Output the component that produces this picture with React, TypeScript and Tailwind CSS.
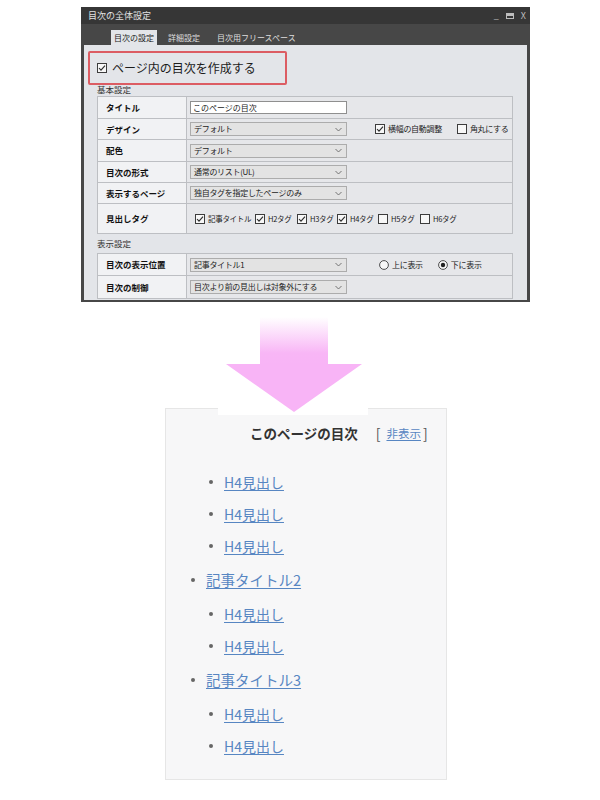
import React from 'react';

const jp = "font-['Noto_Sans_CJK_JP','Noto_Sans',sans-serif]";

const Check = ({ checked }: { checked?: boolean }) => (
  <svg width="10" height="10" viewBox="0 0 10 10" className="shrink-0">
    <rect x="0.5" y="0.5" width="9" height="9" fill="#f7f7f7" stroke="#3c3c3c" />
    {checked && <polyline points="2,5 4,7.2 8,2.6" fill="none" stroke="#2a2a2a" strokeWidth="1.1" />}
  </svg>
);

const Radio = ({ checked }: { checked?: boolean }) => (
  <svg width="10" height="10" viewBox="0 0 10 10" className="shrink-0">
    <circle cx="5" cy="5" r="4.4" fill="#f7f7f7" stroke="#3c3c3c" strokeWidth="0.9" />
    {checked && <circle cx="5" cy="5" r="2.2" fill="#222" />}
  </svg>
);

const Select = ({ value }: { value: string }) => (
  <div className="flex h-[14px] w-[157px] shrink-0 items-center justify-between border border-[#acacac] bg-[#e3e3e3] pl-[3px] pr-[4px]">
    <span className="whitespace-nowrap text-[8px] leading-none tracking-[-0.3px] text-[#222]">{value}</span>
    <svg width="7" height="5" viewBox="0 0 7 5" className="shrink-0">
      <polyline points="0.5,1 3.5,4 6.5,1" fill="none" stroke="#666" strokeWidth="0.9" />
    </svg>
  </div>
);

const Row = ({ label, h, children }: { label: string; h: string; children: React.ReactNode }) => (
  <div className={`flex ${h} border-b border-[#bdbfc3] last:border-b-0`}>
    <div className="flex w-[89px] shrink-0 items-center whitespace-nowrap border-r border-[#bdbfc3] bg-[#f1f2f4] pl-[8px] text-[8.5px] font-bold text-[#111]">
      {label}
    </div>
    <div className="flex flex-1 items-center bg-[#e6e7ea] pl-[3px]">{children}</div>
  </div>
);

const Opt = ({ label, w, ml, children }: { label: string; w?: string; ml?: string; children: React.ReactNode }) => (
  <div className={`flex shrink-0 items-center gap-[3px] whitespace-nowrap text-[8px] tracking-[-0.3px] text-[#222] ${w ?? ''} ${ml ?? ''}`}>
    {children}
    <span>{label}</span>
  </div>
);

const Bullet = ({ href, top }: { href: string; top?: boolean }) => (
  <li className={`flex items-center ${top ? 'h-[36px] pl-[25px] text-[14.5px]' : 'h-[32px] pl-[43px] text-[14px]'}`}>
    <span className="mr-[11px] h-[4px] w-[4px] rounded-full bg-[#666]" />
    <a className="text-[#5786c2] underline underline-offset-2" href="#">{href}</a>
  </li>
);

export default function App() {
  return (
    <div className={`min-h-[800px] w-[600px] bg-white ${jp}`}>
      {/* settings dialog */}
      <div className="ml-[81px] w-[449px] pt-[7px]">
        <div className="flex h-[17px] items-center justify-between bg-[#363636] pl-[7px] pr-[4px]">
          <span className="text-[9px] text-[#e2e2e2]">目次の全体設定</span>
          <div className="flex items-center gap-[7px] text-[9px] text-[#bdbdbd]">
            <span className="leading-none">_</span>
            <span className="block h-[6px] w-[8px] border-[1.5px] border-t-[3px] border-[#bdbdbd]" />
            <span className="leading-none">X</span>
          </div>
        </div>
        <div className="flex h-[21px] items-end bg-[#474747] pl-[30px]">
          <div className="flex h-[15px] w-[46px] items-center justify-center whitespace-nowrap bg-[#e3e5e9] text-[8px] text-[#222]">目次の設定</div>
          <div className="flex h-[15px] items-center whitespace-nowrap pl-[11px] text-[8px] text-[#dedede]">詳細設定</div>
          <div className="flex h-[15px] items-center whitespace-nowrap pl-[17px] text-[8px] text-[#dedede]">目次用フリースペース</div>
        </div>
        <div className="h-[257px] border-x-[3px] border-b-[2px] border-[#474747] bg-[#e3e5e9] pt-[6px]">
          <div className="relative z-10 ml-[4px] flex h-[34px] w-[199px] items-center gap-[5px] rounded-[2px] border-2 border-[#dc5d63] pl-[7px]">
            <Check checked />
            <span className="text-[12px] text-[#1c1c1c]">ページ内の目次を作成する</span>
          </div>
          <div className="ml-[13px] mt-[-2px] text-[8.5px] leading-[12px] text-[#333]">基本設定</div>
          <div className="ml-[13px] mt-[1px] w-[416px] border border-[#bdbfc3]">
            <Row label="タイトル" h="h-[22px]">
              <div className="flex h-[13px] w-[157px] items-center whitespace-nowrap border border-[#8f8f8f] bg-white pl-[2px] text-[8px] text-[#222]">
                このページの目次
              </div>
            </Row>
            <Row label="デザイン" h="h-[21px]">
              <Select value="デフォルト" />
              <Opt label="横幅の自動調整" ml="ml-[28px]"><Check checked /></Opt>
              <Opt label="角丸にする" ml="ml-[15px]"><Check /></Opt>
            </Row>
            <Row label="配色" h="h-[22px]">
              <Select value="デフォルト" />
            </Row>
            <Row label="目次の形式" h="h-[21px]">
              <Select value="通常のリスト(UL)" />
            </Row>
            <Row label="表示するページ" h="h-[21px]">
              <Select value="独自タグを指定したページのみ" />
            </Row>
            <Row label="見出しタグ" h="h-[29px]">
              <div className="flex items-center pl-[5px] text-[7.5px]">
                <Opt label="記事タイトル" w="w-[60px] !text-[7.5px]"><Check checked /></Opt>
                <Opt label="H2タグ" w="w-[42px] !text-[7.5px]"><Check checked /></Opt>
                <Opt label="H3タグ" w="w-[40px] !text-[7.5px]"><Check checked /></Opt>
                <Opt label="H4タグ" w="w-[41px] !text-[7.5px]"><Check checked /></Opt>
                <Opt label="H5タグ" w="w-[42px] !text-[7.5px]"><Check /></Opt>
                <Opt label="H6タグ" w="w-[42px] !text-[7.5px]"><Check /></Opt>
              </div>
            </Row>
          </div>
          <div className="ml-[13px] flex h-[19px] items-center text-[8.5px] text-[#333]">表示設定</div>
          <div className="ml-[13px] w-[416px] border border-[#bdbfc3]">
            <Row label="目次の表示位置" h="h-[22px]">
              <Select value="記事タイトル1" />
              <Opt label="上に表示" ml="ml-[32px]"><Radio /></Opt>
              <Opt label="下に表示" ml="ml-[15px]"><Radio checked /></Opt>
            </Row>
            <Row label="目次の制御" h="h-[22px]">
              <Select value="目次より前の見出しは対象外にする" />
            </Row>
          </div>
        </div>
      </div>

      {/* arrow */}
      <div className="relative z-10 ml-[218px] h-[113px] w-[150px] bg-white">
        <svg width="150" height="113" viewBox="0 0 150 113">
          <defs>
            <linearGradient id="shaft" x1="0" y1="0" x2="0" y2="1">
              <stop offset="0" stopColor="#ffffff" />
              <stop offset="0.75" stopColor="#f8b6f6" />
              <stop offset="1" stopColor="#f8b4f6" />
            </linearGradient>
          </defs>
          <rect x="42" y="15" width="68" height="48" fill="url(#shaft)" />
          <polygon points="8,62 144,62 76,110" fill="#f8b4f6" />
        </svg>
      </div>

      {/* table of contents */}
      <div className="ml-[165px] mt-[-7px] h-[372px] w-[282px] border border-[#e6e6e6] bg-[#f7f7f8]">
        <div className="mt-[12px] flex h-[24px] items-center pl-[84px] pt-[1px]">
          <span className="text-[13.5px] font-bold text-[#333]">このページの目次</span>
          <span className="ml-[18px] text-[14px] text-[#555]">[</span>
          <a href="#" className="ml-[6px] text-[11.5px] text-[#5786c2] underline underline-offset-2">非表示</a>
          <span className="ml-[2px] text-[14px] text-[#555]">]</span>
        </div>
        <ul className="mt-[21px]">
          <Bullet href="H4見出し" />
          <Bullet href="H4見出し" />
          <Bullet href="H4見出し" />
          <Bullet href="記事タイトル2" top />
          <Bullet href="H4見出し" />
          <Bullet href="H4見出し" />
          <Bullet href="記事タイトル3" top />
          <Bullet href="H4見出し" />
          <Bullet href="H4見出し" />
        </ul>
      </div>
    </div>
  );
}
